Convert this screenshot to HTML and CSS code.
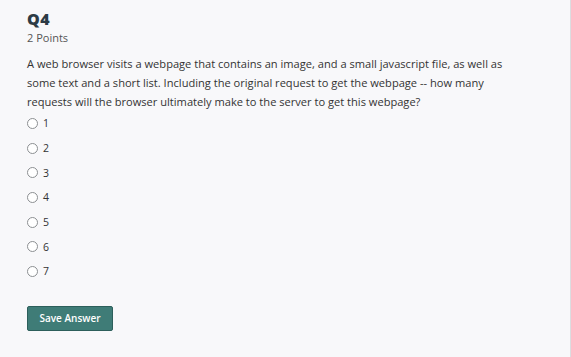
FILE: index.html
```html
<!DOCTYPE html>
<html lang="en">
<head>
    <meta charset="UTF-8">
    <title>Q4</title>
    <link rel="stylesheet" href="styles.css">
</head>
<body>
<div class="page">
    <div class="question">
        <h2 class="title">Q4</h2>
        <div class="points">2 Points</div>
        <p class="text">A web browser visits a webpage that contains an image, and a small javascript file, as well as some text and a short list. Including the original request to get the webpage -- how many requests will the browser ultimately make to the server to get this webpage?</p>
        <ul class="answers">
            <li><label><span class="radio"></span>1</label></li>
            <li><label><span class="radio"></span>2</label></li>
            <li><label><span class="radio"></span>3</label></li>
            <li><label><span class="radio"></span>4</label></li>
            <li><label><span class="radio"></span>5</label></li>
            <li><label><span class="radio"></span>6</label></li>
            <li><label><span class="radio"></span>7</label></li>
        </ul>
        <button class="save">Save Answer</button>
    </div>
</div>
</body>
</html>
```

FILE: styles.css
```css
*{
    margin: 0;
    padding: 0;
    box-sizing: border-box;
}
html, body{
    height: 100%;
}
body{
    background: #f8f8fa;
    font-family: "Open Sans", "Liberation Sans", sans-serif;
    color: #333;
}
.page{
    height: 100%;
    border-right: 1px solid #dcdde0;
}
.question{
    padding: 8px 27px 0 27px;
}
.title{
    font-size: 16px;
    font-weight: 800;
    letter-spacing: 0.4px;
    color: #2d3b45;
    line-height: 22px;
}
.points{
    margin-top: 1px;
    font-size: 11px;
    color: #555;
    line-height: 14px;
}
.text{
    margin-top: 9px;
    font-size: 11.1px;
    line-height: 19px;
    color: #333;
    max-width: 500px;
}
.answers{
    list-style: none;
}
.answers li{
    height: 24.7px;
    display: flex;
    align-items: center;
}
.answers label{
    display: flex;
    align-items: center;
    font-size: 10.5px;
    color: #333;
}
.radio{
    width: 11px;
    height: 11px;
    border: 1.5px solid #8c8f92;
    border-radius: 50%;
    margin-right: 5px;
    background: #fff;
}
.save{
    margin-top: 22px;
    width: 86px;
    height: 25px;
    background: #3f7c77;
    border: 1px solid #2d5f5b;
    border-radius: 2px;
    color: #fff;
    font-family: inherit;
    font-size: 10px;
    font-weight: 600;
}
```
